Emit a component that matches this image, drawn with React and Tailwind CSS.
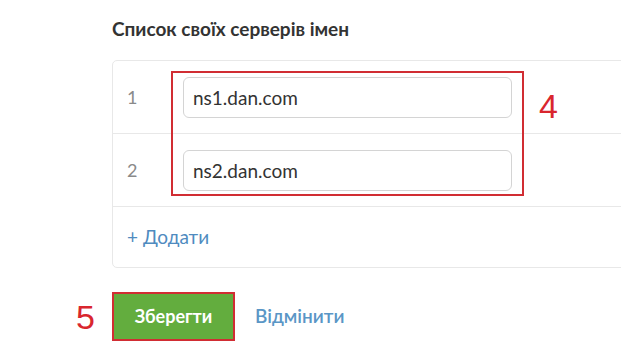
import React from 'react';

const servers = ['ns1.dan.com', 'ns2.dan.com'];

const ServerRow = ({ index, value }) => (
  <div className="flex items-center h-[73px] border-b border-[#e8e8e8]">
    <div className="w-[70px] pl-[14px] text-[18px] text-[#8a8a8a]">{index}</div>
    <input
      readOnly
      value={value}
      className="w-[329px] h-[41px] px-[9px] rounded-[6px] border border-[#d4d4d4] text-[19px] text-[#333] outline-none bg-white"
    />
  </div>
);

export default function App() {
  return (
    <div className="relative w-[621px] h-[355px] overflow-hidden bg-white font-['Lato','Open_Sans',sans-serif]">
      <div className="pl-[112px] pt-[16px]">
        <h2 className="text-[19px] font-bold text-[#333] leading-[26px]">Список своїх серверів імен</h2>

        <div className="mt-[18px] w-[560px] rounded-[5px] border border-[#e8e8e8]">
          {servers.map((s, i) => (
            <ServerRow key={s} index={i + 1} value={s} />
          ))}
          <div className="h-[60px] flex items-center pl-[14px] text-[19px] text-[#4f8bbf]">
            + Додати
          </div>
        </div>

        <div className="mt-[24px] flex items-center gap-[20px]">
          <button className="w-[123px] h-[49px] bg-[#63ad3e] border-2 border-[#d12d33] text-white font-bold text-[18px]">
            Зберегти
          </button>
          <span className="text-[19px] font-semibold text-[#5a96c6]">Відмінити</span>
        </div>
      </div>

      {/* annotations */}
      <div className="absolute left-[171px] top-[71px] w-[353px] h-[125px] border-2 border-[#d12d33]" />
      <div className="absolute left-[539px] top-[86px] text-[34px] leading-[40px] text-[#d9262e] font-['Liberation_Sans',sans-serif]">4</div>
      <div className="absolute left-[76px] top-[297px] text-[34px] leading-[40px] text-[#d9262e] font-['Liberation_Sans',sans-serif]">5</div>
    </div>
  );
}
